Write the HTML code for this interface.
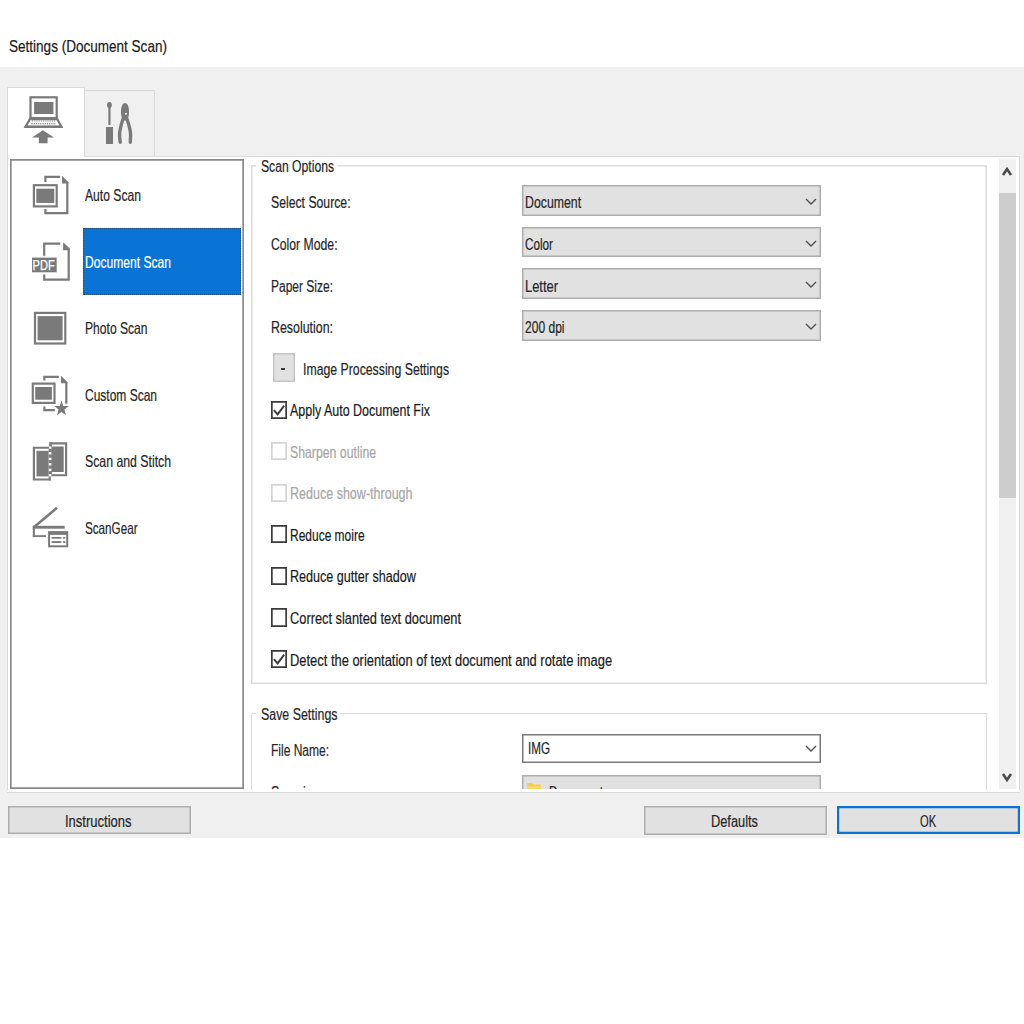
<!DOCTYPE html>
<html><head><meta charset="utf-8"><style>
html,body{margin:0;padding:0;background:#fff;width:1024px;height:1024px;overflow:hidden;position:relative;font-family:"Liberation Sans",sans-serif;}
body>div,body>svg,.c>div,.c>svg{position:absolute;}
.t{white-space:nowrap;-webkit-text-stroke:0.2px currentColor;}
</style></head><body>
<div style="left:0px;top:67px;width:1024px;height:771px;background:#f0f0f0;"></div>
<div class="t" style="left:8.80px;top:38.01px;font-size:17px;line-height:17px;color:#1a1a1a;transform:scaleX(0.7960);transform-origin:0 0;">Settings (Document Scan)</div>
<div style="left:84px;top:90px;width:71px;height:67px;background:#f0f0f0;box-shadow:inset 0 0 0 1px #d9d9d9;"></div>
<div style="left:7px;top:87px;width:78px;height:73px;background:#ffffff;box-shadow:inset 0 0 0 1px #d9d9d9;"></div>
<div style="left:8px;top:158px;width:76px;height:2px;background:#ffffff;"></div>
<div style="left:7px;top:156px;width:1012.6px;height:637px;background:#ffffff;box-shadow:inset 0 0 0 1px #d9d9d9;"></div>
<div style="left:8px;top:156px;width:76px;height:3px;background:#ffffff;"></div>
<div style="left:10.2px;top:159px;width:233.4px;height:630px;background:#ffffff;box-shadow:inset 0 0 0 1.7px #8a8a8a;"></div>
<div style="left:83px;top:228px;width:158px;height:67px;background:#0a74d6;outline:1px dotted #1d4f80;outline-offset:-1px;"></div>
<div class="t" style="left:85.00px;top:186.93px;font-size:16.5px;line-height:16.5px;color:#262626;transform:scaleX(0.7344);transform-origin:0 0;">Auto Scan</div>
<div class="t" style="left:85.00px;top:253.73px;font-size:16.5px;line-height:16.5px;color:#fff;transform:scaleX(0.7319);transform-origin:0 0;">Document Scan</div>
<div class="t" style="left:85.00px;top:320.23px;font-size:16.5px;line-height:16.5px;color:#262626;transform:scaleX(0.7331);transform-origin:0 0;">Photo Scan</div>
<div class="t" style="left:85.00px;top:386.93px;font-size:16.5px;line-height:16.5px;color:#262626;transform:scaleX(0.7273);transform-origin:0 0;">Custom Scan</div>
<div class="t" style="left:85.00px;top:453.43px;font-size:16.5px;line-height:16.5px;color:#262626;transform:scaleX(0.7446);transform-origin:0 0;">Scan and Stitch</div>
<div class="t" style="left:85.00px;top:520.03px;font-size:16.5px;line-height:16.5px;color:#262626;transform:scaleX(0.7071);transform-origin:0 0;">ScanGear</div>
<svg style="left:20px;top:90px" width="50" height="60" viewBox="0 0 50 60"><rect x="10.5" y="7.3" width="26.2" height="21.8" fill="none" stroke="#7a7a7a" stroke-width="2.2"/>
<rect x="14.1" y="12" width="19.3" height="12" fill="#7a7a7a"/>
<polygon points="10.5,28.1 36.7,28.1 41.4,36.7 5.5,36.7" fill="none" stroke="#7a7a7a" stroke-width="2.2" stroke-linejoin="miter"/>
<line x1="12" y1="31" x2="35.5" y2="31" stroke="#7a7a7a" stroke-width="1.1" stroke-dasharray="1.2 1"/>
<line x1="11.5" y1="33.6" x2="36" y2="33.6" stroke="#7a7a7a" stroke-width="1.1" stroke-dasharray="1.2 1"/>
<rect x="4.6" y="35.8" width="37.8" height="2.2" fill="#7a7a7a"/>
<polygon points="22.9,40.2 34,47.5 27.6,47.5 27.6,53.3 18.8,53.3 18.8,47.5 12,47.5" fill="#7a7a7a"/></svg>
<svg style="left:95px;top:95px" width="50" height="55" viewBox="0 0 50 55"><ellipse cx="14.4" cy="10" rx="2.4" ry="3.1" fill="#7a7a7a"/>
<rect x="13.35" y="10" width="2.2" height="20" fill="#7a7a7a"/>
<rect x="11" y="32" width="7" height="17" fill="#7a7a7a"/>
<path d="M30,8 C34.6,8 34.6,19.5 33.2,22.5 L30,26 L26.8,22.5 C25.4,19.5 25.4,8 30,8 Z" fill="#7a7a7a"/>
<circle cx="31" cy="18.8" r="1" fill="#f0f0f0"/>
<path d="M28,24 C26,30 24.2,36 24.6,41 C24.8,44 25,46 25.2,47.2" fill="none" stroke="#7a7a7a" stroke-width="3.4" stroke-linecap="round"/>
<path d="M32,24 C34,30 36,36 35.6,41 C35.4,44 35.3,46 35.3,47.2" fill="none" stroke="#7a7a7a" stroke-width="3.4" stroke-linecap="round"/></svg>
<svg style="left:25px;top:168px" width="50" height="55" viewBox="0 0 50 55"><path d="M20.4,14 V8.85 H35.2 M42.3,14.5 V45.1 H20.4 V41.1" fill="none" stroke="#7a7a7a" stroke-width="2.2"/>
<polygon points="37,7.8 43.4,14.2 43.4,15.5 37,15.5" fill="#7a7a7a"/>
<rect x="8.9" y="17.2" width="22.8" height="21.2" fill="none" stroke="#7a7a7a" stroke-width="2.2"/>
<rect x="11.3" y="20.7" width="18" height="14.2" fill="#7a7a7a"/></svg>
<svg style="left:25px;top:235px" width="50" height="55" viewBox="0 0 50 55"><path d="M19.2,20.7 V8.7 H35.2 M43.7,13.4 V44.7 H19.2 V39.5" fill="none" stroke="#7a7a7a" stroke-width="2.2"/>
<polygon points="38.1,7.3 44.8,13.4 44.8,15.3 38.1,15.3" fill="#7a7a7a"/>
<rect x="7" y="22.6" width="24.7" height="14.7" fill="#7a7a7a"/>
<text x="7.6" y="34.9" font-family="Liberation Sans" font-size="14" fill="#fff" stroke="#fff" stroke-width="0.25" textLength="22" lengthAdjust="spacingAndGlyphs">PDF</text></svg>
<svg style="left:25px;top:300px" width="50" height="55" viewBox="0 0 50 55"><rect x="10" y="12.9" width="30.3" height="30.6" fill="none" stroke="#7a7a7a" stroke-width="2.2"/>
<rect x="12.6" y="16.1" width="25" height="24.2" fill="#7a7a7a"/></svg>
<svg style="left:25px;top:368px" width="50" height="55" viewBox="0 0 50 55"><path d="M19.35,12.6 V8.85 H33.8 M41.35,14.5 V35.7 M19.35,38.4 V42.1 H29.8" fill="none" stroke="#7a7a7a" stroke-width="2.2"/>
<polygon points="36,7.8 42.5,14.2 42.5,15.2 36,15.2" fill="#7a7a7a"/>
<rect x="7.8" y="15.6" width="21.7" height="19.3" fill="none" stroke="#7a7a7a" stroke-width="2.2"/>
<rect x="10.2" y="19" width="16.7" height="12.7" fill="#7a7a7a"/>
<polygon points="36.5,32.5 38.3,38.1 43.8,38.1 39.4,41.6 41,47.3 36.5,43.9 32,47.3 33.6,41.6 29.2,38.1 34.7,38.1" fill="#7a7a7a"/></svg>
<svg style="left:25px;top:435px" width="50" height="55" viewBox="0 0 50 55"><path d="M24,12.6 H8.9 V44.5 H25.8" fill="none" stroke="#7a7a7a" stroke-width="2.2"/>
<rect x="11.5" y="15.8" width="12.1" height="25.6" fill="#7a7a7a"/>
<path d="M24.2,8.35 H41.1 V40.3 H26.9" fill="none" stroke="#7a7a7a" stroke-width="2.2"/>
<rect x="26.9" y="11.5" width="11.8" height="25.5" fill="#7a7a7a"/>
<rect x="23.6" y="7.25" width="3.3" height="38.35" fill="#7a7a7a"/>
<rect x="7.8" y="7" width="16.4" height="4.5" fill="#fff"/>
<rect x="25.8" y="41.4" width="17" height="4.5" fill="#fff"/>
<g fill="#fff"><rect x="23.9" y="11.4" width="2.4" height="2.4"/><rect x="23.9" y="17.1" width="2.4" height="2.4"/><rect x="23.9" y="22.7" width="2.4" height="2.4"/><rect x="23.9" y="28.1" width="2.4" height="2.4"/><rect x="23.9" y="33.7" width="2.4" height="2.4"/><rect x="23.9" y="39.1" width="2.4" height="2.4"/></g></svg>
<svg style="left:25px;top:500px" width="50" height="55" viewBox="0 0 50 55"><line x1="32" y1="7.8" x2="9.5" y2="26.8" stroke="#7a7a7a" stroke-width="2.6"/>
<rect x="7.8" y="25.8" width="31.9" height="2.9" fill="#7a7a7a"/>
<rect x="7.8" y="25.8" width="2.1" height="11.2" fill="#7a7a7a"/>
<rect x="7.8" y="35.2" width="13.1" height="1.8" fill="#7a7a7a"/>
<rect x="23.1" y="31.1" width="20.1" height="16.2" fill="#7a7a7a"/>
<rect x="25.1" y="34.9" width="16.1" height="10.4" fill="#fff"/>
<rect x="26.6" y="37" width="9.7" height="1.7" fill="#7a7a7a"/><rect x="26.6" y="41.1" width="9.7" height="1.9" fill="#7a7a7a"/>
<rect x="38.1" y="37" width="2.2" height="1.7" fill="#7a7a7a"/><rect x="38.1" y="41.1" width="2.2" height="1.9" fill="#7a7a7a"/></svg>
<div style="left:251px;top:165px;width:736px;height:519px;box-shadow:inset 0 0 0 1.5px #dcdcdc;"></div>
<div style="left:256px;top:158px;width:82px;height:17px;background:#fff;"></div>
<div class="t" style="left:260.50px;top:159.15px;font-size:16px;line-height:16px;color:#262626;transform:scaleX(0.7604);transform-origin:0 0;">Scan Options</div>
<div style="left:251px;top:713px;width:736px;height:78px;border:1.5px solid #dcdcdc;border-bottom:none;box-sizing:border-box;"></div>
<div style="left:256px;top:706px;width:84px;height:16px;background:#fff;"></div>
<div class="t" style="left:260.50px;top:707.35px;font-size:16px;line-height:16px;color:#262626;transform:scaleX(0.7747);transform-origin:0 0;">Save Settings</div>
<div class="t" style="left:270.70px;top:195.35px;font-size:16px;line-height:16px;color:#262626;transform:scaleX(0.7644);transform-origin:0 0;">Select Source:</div>
<div style="left:522px;top:185.0px;width:299px;height:30.5px;background:#e1e1e1;box-shadow:inset 0 0 0 1.5px #adadad;"></div>
<div class="t" style="left:524.80px;top:195.35px;font-size:16px;line-height:16px;color:#262626;transform:scaleX(0.7699);transform-origin:0 0;">Document</div>
<svg style="left:805px;top:198.0px" width="12" height="8"><polyline points="1,1 6,6 11,1" fill="none" stroke="#505050" stroke-width="1.35"/></svg>
<div class="t" style="left:270.70px;top:237.15px;font-size:16px;line-height:16px;color:#262626;transform:scaleX(0.7633);transform-origin:0 0;">Color Mode:</div>
<div style="left:522px;top:226.7px;width:299px;height:30.5px;background:#e1e1e1;box-shadow:inset 0 0 0 1.5px #adadad;"></div>
<div class="t" style="left:524.80px;top:237.15px;font-size:16px;line-height:16px;color:#262626;transform:scaleX(0.7320);transform-origin:0 0;">Color</div>
<svg style="left:805px;top:239.7px" width="12" height="8"><polyline points="1,1 6,6 11,1" fill="none" stroke="#505050" stroke-width="1.35"/></svg>
<div class="t" style="left:270.70px;top:278.65px;font-size:16px;line-height:16px;color:#262626;transform:scaleX(0.7492);transform-origin:0 0;">Paper Size:</div>
<div style="left:522px;top:268.3px;width:299px;height:30.5px;background:#e1e1e1;box-shadow:inset 0 0 0 1.5px #adadad;"></div>
<div class="t" style="left:524.80px;top:278.65px;font-size:16px;line-height:16px;color:#262626;transform:scaleX(0.8049);transform-origin:0 0;">Letter</div>
<svg style="left:805px;top:281.3px" width="12" height="8"><polyline points="1,1 6,6 11,1" fill="none" stroke="#505050" stroke-width="1.35"/></svg>
<div class="t" style="left:270.70px;top:320.05px;font-size:16px;line-height:16px;color:#262626;transform:scaleX(0.7750);transform-origin:0 0;">Resolution:</div>
<div style="left:522px;top:310.0px;width:299px;height:30.5px;background:#e1e1e1;box-shadow:inset 0 0 0 1.5px #adadad;"></div>
<div class="t" style="left:524.80px;top:320.05px;font-size:16px;line-height:16px;color:#262626;transform:scaleX(0.7524);transform-origin:0 0;">200 dpi</div>
<svg style="left:805px;top:323.0px" width="12" height="8"><polyline points="1,1 6,6 11,1" fill="none" stroke="#505050" stroke-width="1.35"/></svg>
<div style="left:273px;top:353px;width:22px;height:29px;background:#e1e1e1;box-shadow:inset 0 0 0 1.5px #c4c4c4;"></div>
<div style="left:281px;top:368.3px;width:4.300000000000011px;height:1.6999999999999886px;background:#3a3a3a;"></div>
<div class="t" style="left:302.90px;top:362.15px;font-size:16px;line-height:16px;color:#262626;transform:scaleX(0.7674);transform-origin:0 0;">Image Processing Settings</div>
<div style="left:271px;top:400.5px;width:15.800000000000011px;height:18.30000000000001px;background:#fff;box-shadow:inset 0 0 0 1.7px #3a3a3a;"></div>
<svg style="left:271px;top:400.5px" width="16" height="18"><polyline points="2.9,9.2 6.6,13.4 13.2,4.6" fill="none" stroke="#3a3a3a" stroke-width="1.9"/></svg>
<div class="t" style="left:289.80px;top:403.15px;font-size:16px;line-height:16px;color:#1a1a1a;transform:scaleX(0.7789);transform-origin:0 0;">Apply Auto Document Fix</div>
<div style="left:271px;top:442.1px;width:15.800000000000011px;height:18.299999999999955px;background:#fff;box-shadow:inset 0 0 0 1.7px #d4d4d4;"></div>
<div class="t" style="left:289.80px;top:444.73px;font-size:16px;line-height:16px;color:#a6a6a6;transform:scaleX(0.7679);transform-origin:0 0;">Sharpen outline</div>
<div style="left:271px;top:483.7px;width:15.800000000000011px;height:18.30000000000001px;background:#fff;box-shadow:inset 0 0 0 1.7px #d4d4d4;"></div>
<div class="t" style="left:289.80px;top:486.31px;font-size:16px;line-height:16px;color:#a6a6a6;transform:scaleX(0.7827);transform-origin:0 0;">Reduce show-through</div>
<div style="left:271px;top:525.2px;width:15.800000000000011px;height:18.299999999999955px;background:#fff;box-shadow:inset 0 0 0 1.7px #3a3a3a;"></div>
<div class="t" style="left:289.80px;top:527.89px;font-size:16px;line-height:16px;color:#1a1a1a;transform:scaleX(0.7487);transform-origin:0 0;">Reduce moire</div>
<div style="left:271px;top:566.8px;width:15.800000000000011px;height:18.300000000000068px;background:#fff;box-shadow:inset 0 0 0 1.7px #3a3a3a;"></div>
<div class="t" style="left:289.80px;top:569.47px;font-size:16px;line-height:16px;color:#1a1a1a;transform:scaleX(0.7863);transform-origin:0 0;">Reduce gutter shadow</div>
<div style="left:271px;top:608.4px;width:15.800000000000011px;height:18.300000000000068px;background:#fff;box-shadow:inset 0 0 0 1.7px #3a3a3a;"></div>
<div class="t" style="left:289.80px;top:611.05px;font-size:16px;line-height:16px;color:#1a1a1a;transform:scaleX(0.8009);transform-origin:0 0;">Correct slanted text document</div>
<div style="left:271px;top:650.0px;width:15.800000000000011px;height:18.299999999999955px;background:#fff;box-shadow:inset 0 0 0 1.7px #3a3a3a;"></div>
<svg style="left:271px;top:650.0px" width="16" height="18"><polyline points="2.9,9.2 6.6,13.4 13.2,4.6" fill="none" stroke="#3a3a3a" stroke-width="1.9"/></svg>
<div class="t" style="left:289.80px;top:652.63px;font-size:16px;line-height:16px;color:#1a1a1a;transform:scaleX(0.8065);transform-origin:0 0;">Detect the orientation of text document and rotate image</div>
<div class="c" style="left:0;top:0;width:1024px;height:789px;overflow:hidden">
<div class="t" style="left:270.50px;top:743.35px;font-size:16px;line-height:16px;color:#262626;transform:scaleX(0.7508);transform-origin:0 0;">File Name:</div>
<div style="left:522px;top:734px;width:299px;height:29px;background:#fff;box-shadow:inset 0 0 0 1.5px #7a7a7a;"></div>
<div class="t" style="left:528.00px;top:741.15px;font-size:16px;line-height:16px;color:#262626;transform:scaleX(0.7273);transform-origin:0 0;">IMG</div>
<svg style="left:805px;top:745px" width="12" height="8"><polyline points="1,1 6,6 11,1" fill="none" stroke="#505050" stroke-width="1.35"/></svg>
<div style="left:522px;top:775.4px;width:299px;height:29.600000000000023px;background:#e1e1e1;box-shadow:inset 0 0 0 1.5px #adadad;"></div>
<svg style="left:526px;top:780px" width="16" height="14"><path d="M1,3 h5 l1.5,1.5 h7 v9 h-13.5z" fill="#f3c94a"/><path d="M1,6 h14 v7 h-14z" fill="#fbd965"/><rect x="7" y="9" width="7" height="4" fill="#3b8ed8"/></svg>
<div class="t" style="left:548.50px;top:784.85px;font-size:16px;line-height:16px;color:#262626;transform:scaleX(0.7407);transform-origin:0 0;">Documents</div>
<div class="t" style="left:270.50px;top:784.85px;font-size:16px;line-height:16px;color:#262626;transform:scaleX(0.7792);transform-origin:0 0;">Save in:</div>
</div>
<div style="left:7px;top:791px;width:1017px;height:47px;background:#f0f0f0;"></div>
<div style="left:7px;top:790px;width:1013px;height:3px;background:#ffffff;"></div>
<div style="left:7px;top:792px;width:1013px;height:1px;background:#d9d9d9;"></div>
<div style="left:998.6px;top:158.8px;width:17.600000000000023px;height:630.7px;background:#f0f0f0;"></div>
<div style="left:998.6px;top:193px;width:17.600000000000023px;height:304.5px;background:#cdcdcd;"></div>
<svg style="left:1001px;top:165px" width="12" height="12"><polyline points="2,10 6,4 10,10" fill="none" stroke="#4a4a4a" stroke-width="2.6"/></svg>
<svg style="left:1001px;top:771px" width="12" height="12"><polyline points="2,3 6,9 10,3" fill="none" stroke="#4a4a4a" stroke-width="2.6"/></svg>
<div style="left:7.5px;top:806.3px;width:183.8px;height:28.200000000000045px;background:#e1e1e1;box-shadow:inset 0 0 0 1.5px #adadad;"></div>
<div class="t" style="left:64.50px;top:814.05px;font-size:16px;line-height:16px;color:#262626;transform:scaleX(0.8135);transform-origin:0 0;">Instructions</div>
<div style="left:643.5px;top:806.3px;width:183.70000000000005px;height:28.300000000000068px;background:#e1e1e1;box-shadow:inset 0 0 0 1.5px #adadad;"></div>
<div class="t" style="left:711.00px;top:814.05px;font-size:16px;line-height:16px;color:#262626;transform:scaleX(0.8000);transform-origin:0 0;">Defaults</div>
<div style="left:836.8px;top:806.3px;width:183.10000000000002px;height:28.0px;background:#e1e1e1;box-shadow:inset 0 0 0 2.2px #0a74d6;"></div>
<div class="t" style="left:920.00px;top:814.05px;font-size:16px;line-height:16px;color:#262626;transform:scaleX(0.6957);transform-origin:0 0;">OK</div>
</body></html>
